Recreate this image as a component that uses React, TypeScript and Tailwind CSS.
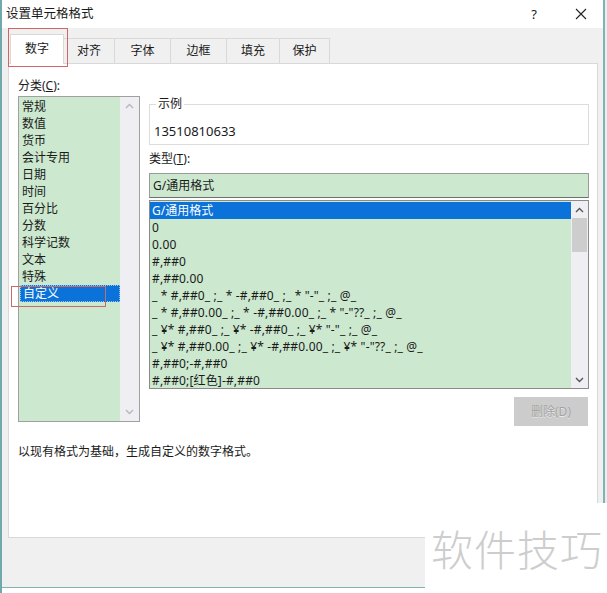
import React from 'react';

const categories = ['常规', '数值', '货币', '会计专用', '日期', '时间', '百分比', '分数', '科学记数', '文本', '特殊', '自定义'];

const formats = [
  'G/通用格式',
  '0',
  '0.00',
  '#,##0',
  '#,##0.00',
  '_ * #,##0_ ;_ * -#,##0_ ;_ * "-"_ ;_ @_',
  '_ * #,##0.00_ ;_ * -#,##0.00_ ;_ * "-"??_ ;_ @_',
  '_ ¥* #,##0_ ;_ ¥* -#,##0_ ;_ ¥* "-"_ ;_ @_',
  '_ ¥* #,##0.00_ ;_ ¥* -#,##0.00_ ;_ ¥* "-"??_ ;_ @_',
  '#,##0;-#,##0',
  '#,##0;[红色]-#,##0',
];

const tabs = [
  { label: '对齐', w: 'w-[51px]' },
  { label: '字体', w: 'w-[56px]' },
  { label: '边框', w: 'w-[56px]' },
  { label: '填充', w: 'w-[53px]' },
  { label: '保护', w: 'w-[50px]' },
];

function Chevron({ up, color }: { up?: boolean; color: string }) {
  return (
    <svg width="9" height="6" viewBox="0 0 9 6">
      <path
        d={up ? 'M1 5 L4.5 1.5 L8 5' : 'M1 1 L4.5 4.5 L8 1'}
        fill="none"
        stroke={color}
        strokeWidth="1.4"
      />
    </svg>
  );
}

export default function App() {
  return (
    <div className="relative w-[607px] h-[593px] overflow-hidden flex bg-[#f0f0f0] font-['Noto_Sans','Noto_Sans_CJK_SC',sans-serif] text-[12px] text-[#1a1a1a]">
      {/* left window edge */}
      <div className="w-[2px] h-full bg-[#6fa9ab]" />

      {/* dialog */}
      <div className="w-[601px] h-full flex flex-col">
        {/* title bar */}
        <div className="h-[28px] bg-white flex items-center pl-[4px]">
          <span className="leading-[16px] text-[12.5px]">设置单元格格式</span>
          <span className="ml-auto w-[12px] text-center text-[13px] leading-[16px] mr-[35px]">?</span>
          <svg width="12" height="12" viewBox="0 0 12 12" className="mr-[16px]">
            <path d="M1 1 L11 11 M11 1 L1 11" stroke="#222" strokeWidth="1.1" />
          </svg>
        </div>

        {/* tabs */}
        <div className="h-[35px] flex items-end pl-[8px]">
          <div className="w-[54px] h-[30px] bg-white border border-b-0 border-[#d9d9d9] flex items-center justify-center relative z-10 -mb-[1px] pb-[1px]">
            数字
          </div>
          {tabs.map((t) => (
            <div
              key={t.label}
              className={`${t.w} h-[25px] border border-l-0 border-b-0 border-[#d9d9d9] flex items-center justify-center bg-[#f0f0f0]`}
            >
              {t.label}
            </div>
          ))}
        </div>

        {/* panel */}
        <div className="ml-[6px] w-[590px] h-[475px] bg-white border border-[#d9d9d9] pt-[12px] pl-[9px]">
          <div className="flex gap-[9px]">
            {/* category column */}
            <div className="w-[122px] flex flex-col">
              <div className="h-[20px] leading-[20px]">
                分类(<span className="underline">C</span>):
              </div>
              <div className="h-[326px] border border-[#a0a0a0] bg-[#cce8cf] flex">
                <div className="flex-1 pt-[1px]">
                  {categories.map((c) => (
                    <div
                      key={c}
                      className={
                        c === '自定义'
                          ? 'h-[17px] ml-[1px] pl-[2px] bg-[#0a72d8] text-white border border-dotted border-[#9cc3ef] leading-[15px]'
                          : 'h-[17px] leading-[17px] pl-[3px]'
                      }
                    >
                      {c}
                    </div>
                  ))}
                </div>
                <div className="w-[19px] bg-[#efeef2] flex flex-col items-center justify-between py-[6px]">
                  <Chevron up color="#b8b8b8" />
                  <Chevron color="#b8b8b8" />
                </div>
              </div>
            </div>

            {/* type column */}
            <div className="w-[440px] flex flex-col pt-[20px]">
              <fieldset className="h-[49px] border border-[#dcdcdc] pl-[4px]">
                <legend className="ml-[2px] px-[2px] leading-[16px]">示例</legend>
                <div className="mt-[11px] leading-[16px] text-[13px]">13510810633</div>
              </fieldset>

              <div className="mt-[7px] h-[14px] leading-[14px]">
                类型(<span className="underline">T</span>):
              </div>

              <div className="mt-[7px] h-[25px] border border-[#9a9a9a] border-b-[#6e6e6e] bg-[#cce8cf] pl-[3px] leading-[23px]">
                G/通用格式
              </div>

              <div className="mt-[2px] h-[189px] border border-[#8a8a8a] bg-[#cce8cf] flex">
                <div className="flex-1 pt-[1px] overflow-hidden">
                  {formats.map((f, i) => (
                    <div
                      key={f}
                      className={
                        i === 0
                          ? 'h-[17px] leading-[17px] pl-[2px] bg-[#0a72d8] text-white whitespace-pre'
                          : 'h-[17px] leading-[17px] pl-[2px] whitespace-pre tracking-[0.15px]'
                      }
                    >
                      {f}
                    </div>
                  ))}
                </div>
                <div className="w-[17px] bg-[#efeef2] flex flex-col items-center">
                  <div className="h-[17px] flex items-center">
                    <Chevron up color="#555" />
                  </div>
                  <div className="w-[15px] h-[34px] bg-[#cdcdcd]" />
                  <div className="mt-auto h-[17px] flex items-center">
                    <Chevron color="#555" />
                  </div>
                </div>
              </div>

              <div className="mt-[8px] self-end mr-[1px] w-[74px] h-[29px] bg-[#cccccc] flex items-center justify-center text-[#a3a3a3] [text-shadow:0_1px_0_#e8e8e8]">
                删除(D)
              </div>
            </div>
          </div>

          <div className="mt-[18px] leading-[16px]">以现有格式为基础，生成自定义的数字格式。</div>
        </div>

        <div className="flex-1" />

        {/* strip of sheet below */}
        <div className="h-[6px] bg-white border-t border-[#7fb3b4]" />
      </div>

      {/* right window edge */}
      <div className="w-[2px] h-full bg-[#7fb3b4]" />
      <div className="w-[2px] h-full bg-[#e6efef]" />

      {/* annotation boxes */}
      <div className="absolute left-[8px] top-[28px] w-[60px] h-[39px] border border-[#d26464]" />
      <div className="absolute left-[11px] top-[286px] w-[95px] h-[21px] border border-[#c86a6a]" />

      {/* watermark */}
      <div className="absolute left-[425px] top-[503px] w-[182px] h-[90px] bg-white flex items-center pl-[6px]">
        <span className="text-[42px] leading-[48px] font-light text-[#cdcdcd] font-['Noto_Sans_CJK_SC',sans-serif] tracking-[1px]">
          软件技巧
        </span>
      </div>
    </div>
  );
}
